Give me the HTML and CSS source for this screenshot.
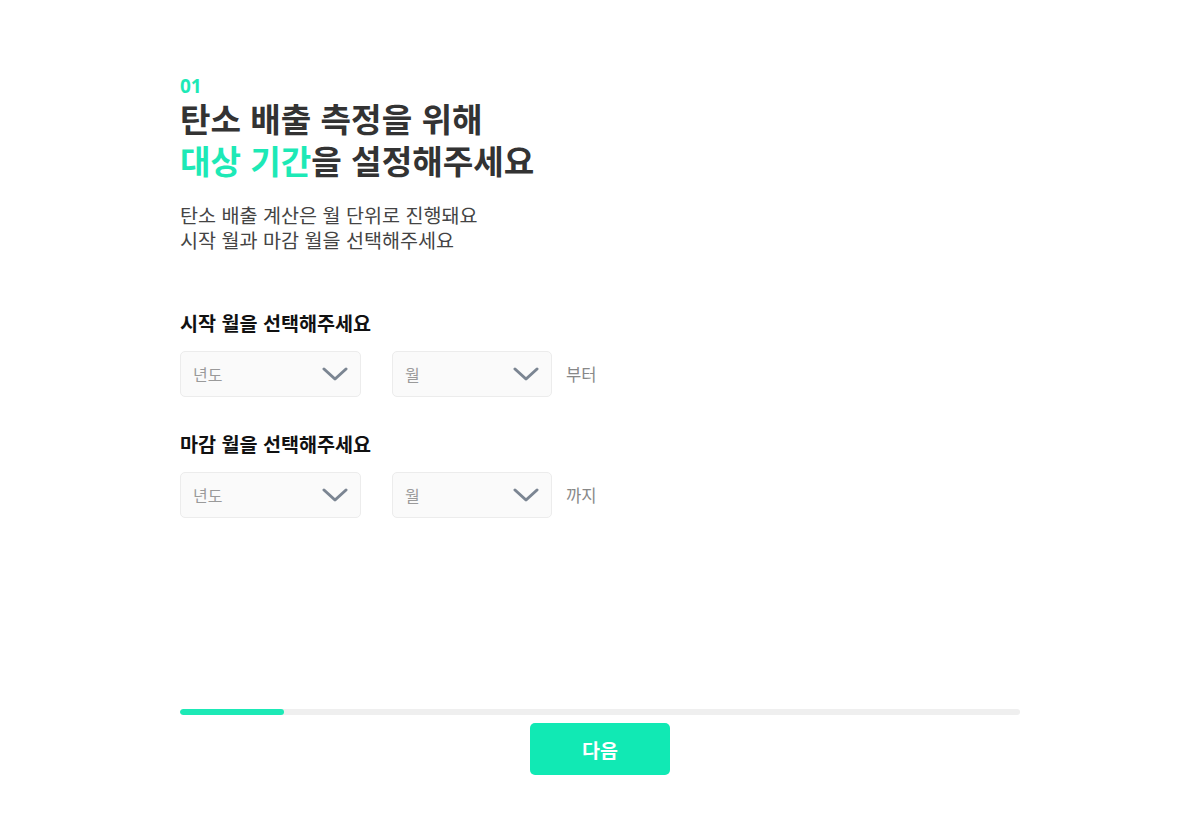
FILE: index.html
```html
<!DOCTYPE html>
<html lang="ko">
<head>
  <meta charset="UTF-8">
  <meta name="viewport" content="width=device-width, initial-scale=1">
  <title>대상 기간 설정</title>
  <link rel="stylesheet" href="styles.css">
</head>
<body>
  <div class="page">
    <div class="intro">
      <div class="step">01</div>
      <h1>탄소 배출 측정을 위해<br><span class="accent">대상 기간</span>을 설정해주세요</h1>
      <p class="desc">탄소 배출 계산은 월 단위로 진행돼요<br>시작 월과 마감 월을 선택해주세요</p>
    </div>

    <div class="field">
      <div class="label">시작 월을 선택해주세요</div>
      <div class="row">
        <div class="select year">
          <span>년도</span>
          <svg class="chev" width="26" height="14" viewBox="0 0 26 14"><path d="M2 2 L13 12 L24 2" fill="none" stroke="#7b8592" stroke-width="3" stroke-linecap="round" stroke-linejoin="round"/></svg>
        </div>
        <div class="select month">
          <span>월</span>
          <svg class="chev" width="26" height="14" viewBox="0 0 26 14"><path d="M2 2 L13 12 L24 2" fill="none" stroke="#7b8592" stroke-width="3" stroke-linecap="round" stroke-linejoin="round"/></svg>
        </div>
        <span class="suffix">부터</span>
      </div>
    </div>

    <div class="field">
      <div class="label">마감 월을 선택해주세요</div>
      <div class="row">
        <div class="select year">
          <span>년도</span>
          <svg class="chev" width="26" height="14" viewBox="0 0 26 14"><path d="M2 2 L13 12 L24 2" fill="none" stroke="#7b8592" stroke-width="3" stroke-linecap="round" stroke-linejoin="round"/></svg>
        </div>
        <div class="select month">
          <span>월</span>
          <svg class="chev" width="26" height="14" viewBox="0 0 26 14"><path d="M2 2 L13 12 L24 2" fill="none" stroke="#7b8592" stroke-width="3" stroke-linecap="round" stroke-linejoin="round"/></svg>
        </div>
        <span class="suffix">까지</span>
      </div>
    </div>

    <div class="bottom">
      <div class="progress"><div class="progress-fill" style="width: 12.4%"></div></div>
      <button class="next">다음</button>
    </div>
  </div>
</body>
</html>
```

FILE: styles.css
```css
* { box-sizing: border-box; }

body {
  margin: 0;
  background: #fff;
  font-family: "Liberation Sans", "Noto Sans CJK KR", sans-serif;
  color: #333;
}

.page {
  width: 840px;
  margin: 0 auto;
  padding-top: 74px;
}

.step {
  color: #1de9b6;
  font-family: "Noto Sans", "Noto Sans CJK KR", sans-serif;
  font-size: 19px;
  font-weight: 700;
  line-height: 25px;
}

h1 {
  margin: 1px 0 0;
  font-size: 33.2px;
  font-weight: 700;
  line-height: 42px;
  color: #333;
}

.accent {
  color: #1de9b6;
}

.desc {
  margin: 20px 0 0;
  font-size: 19.6px;
  line-height: 25px;
  color: #444;
}

.field {
  margin-top: 58px;
}

.field + .field {
  margin-top: 36px;
}

.label {
  font-size: 19.6px;
  font-weight: 700;
  color: #111;
  line-height: 24px;
}

.row {
  display: flex;
  align-items: center;
  margin-top: 15px;
}

.select {
  height: 46px;
  background: #fafafa;
  border: 1px solid #ececec;
  border-radius: 5px;
  display: flex;
  align-items: center;
  justify-content: space-between;
  padding: 0 12px;
  font-size: 16px;
  color: #9a9a9a;
}

.select.year {
  width: 181px;
  margin-right: 31px;
}

.select.month {
  width: 160px;
}

.suffix {
  margin-left: 14px;
  font-size: 16.6px;
  color: #888;
}

.bottom {
  margin-top: 191px;
  display: flex;
  flex-direction: column;
  align-items: center;
}

.progress {
  width: 100%;
  height: 6px;
  background: #efefef;
  border-radius: 3px;
  overflow: hidden;
}

.progress-fill {
  height: 100%;
  background: #1de9b6;
  border-radius: 3px;
}

.next {
  margin-top: 8px;
  width: 140px;
  height: 52px;
  border: none;
  border-radius: 5px;
  background: #11e9b4;
  color: #fff;
  font-family: "Liberation Sans", "Noto Sans CJK KR", sans-serif;
  font-size: 19.5px;
  font-weight: 700;
  cursor: pointer;
}
```
